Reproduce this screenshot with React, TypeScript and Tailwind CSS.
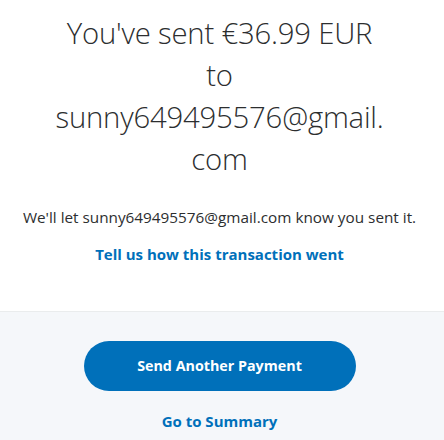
export default function App() {
  return (
    <div className="w-[444px] h-[440px] overflow-hidden bg-white flex flex-col" style={{ fontFamily: '"Open Sans", "Noto Sans", sans-serif' }}>
      <div className="h-[311px] pr-[5px] flex flex-col items-center text-[#2c2e2f]">
        <h1 className="mt-[12px] text-center text-[29.3px] font-light leading-[42px] tracking-[-0.2px]">
          <span className="block">You've sent €36.99 EUR</span>
          <span className="block">to</span>
          <span className="block">sunny649495576@gmail.</span>
          <span className="block">com</span>
        </h1>
        <p className="mt-[27px] text-[15.3px] leading-[20px] whitespace-nowrap">We'll let sunny649495576@gmail.com know you sent it.</p>
        <a className="mt-[17px] text-[15px] leading-[20px] font-bold text-[#0070ba]">Tell us how this transaction went</a>
      </div>
      <div className="flex-1 pr-[5px] bg-[#f5f7fa] border-t border-[#eaeced] flex flex-col items-center">
        <button className="mt-[29px] w-[272px] h-[50px] rounded-full bg-[#0070ba] text-white text-[14.3px] font-bold">Send Another Payment</button>
        <a className="mt-[20px] text-[15px] leading-[20px] font-bold text-[#0070ba]">Go to Summary</a>
      </div>
    </div>
  );
}
